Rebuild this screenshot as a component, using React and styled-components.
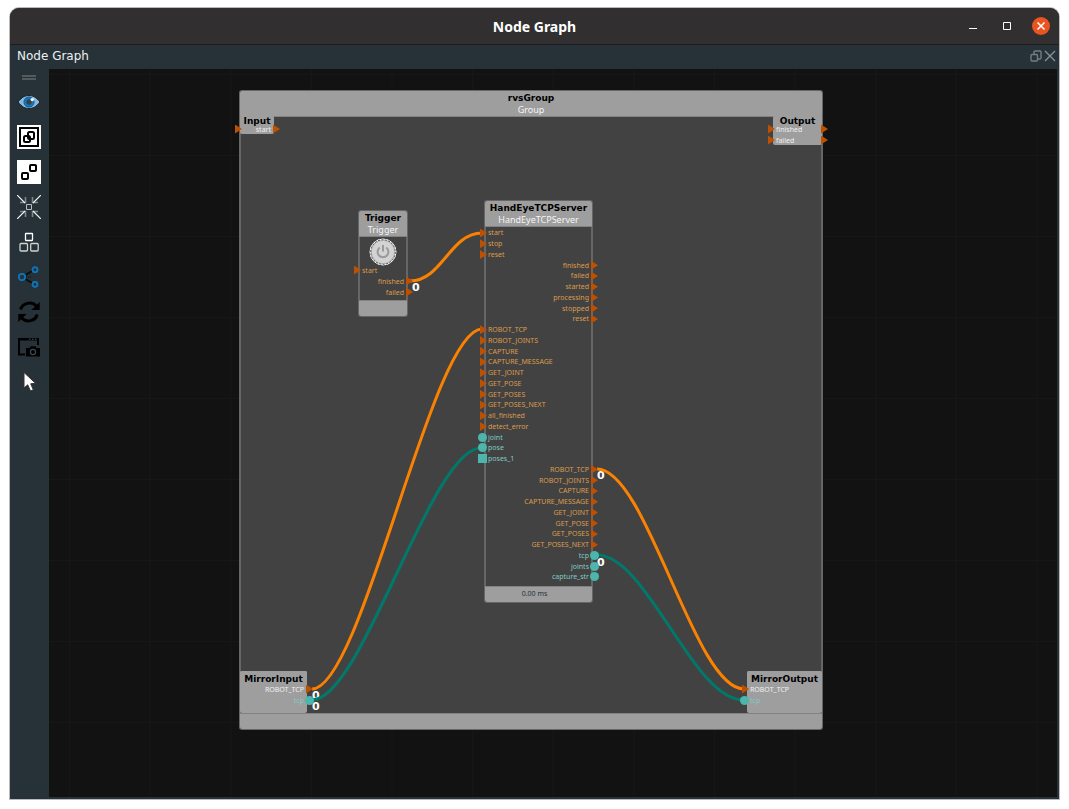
import React from "react";
import styled, { createGlobalStyle, css } from "styled-components";

const GlobalStyle = createGlobalStyle`
  * {
    box-sizing: border-box;
  }

  body {
    margin: 0;
    background: #fff;
    font-family: "DejaVu Sans", "Noto Sans", sans-serif;
  }
`;

const Page = styled.div`
  min-height: 100vh;
  display: flex;
  padding: 8px 10px 10px;
`;

const WindowFrame = styled.main`
  flex: 1;
  display: flex;
  flex-direction: column;
  background: #263238;
  border-radius: 9px 9px 0 0;
  box-shadow: 0 0 0 1px #b8babc;
  overflow: hidden;
`;

const TitleBar = styled.header`
  height: 37px;
  display: grid;
  grid-template-columns: 1fr auto 1fr;
  align-items: center;
  background: #322f30;
  border-bottom: 1px solid #1e1c1d;
`;

const WindowTitle = styled.h1`
  grid-column: 2;
  margin: 0;
  color: #fff;
  font: bold 14px "Noto Sans", sans-serif;
`;

const WindowButtons = styled.div`
  display: flex;
  justify-content: flex-end;
  gap: 16px;
  padding-right: 9px;
`;

const PlainButton = styled.button`
  display: flex;
  align-items: center;
  justify-content: center;
  padding: 0;
  border: 0;
  background: transparent;
  cursor: pointer;
`;

const WindowButton = styled(PlainButton)`
  width: 18px;
  height: 18px;
  border-radius: 50%;
  background: ${({ $close }) => ($close ? "#e95420" : "transparent")};
`;

const DockBar = styled.div`
  height: 24px;
  display: flex;
  align-items: center;
  justify-content: space-between;
  padding: 0 3px 2px 7px;
`;

const DockTitle = styled.h2`
  margin: 0;
  color: #eceff1;
  font-size: 12px;
  font-weight: normal;
  line-height: 22px;
`;

const DockButtons = styled.div`
  display: flex;
  gap: 2px;
`;

const Workspace = styled.div`
  flex: 1;
  display: flex;
  padding: 0 2px 2px 0;
`;

const ToolBar = styled.nav`
  width: 39px;
  display: flex;
  flex-direction: column;
  align-items: center;
  gap: 11px;
  padding: 6px 1px 0 0;
`;

const Grip = styled.div`
  width: 14px;
  height: 5px;
  margin-bottom: -1px;
  border: solid #535b5f;
  border-width: 2px 0;
`;

const ToolButton = styled(PlainButton)`
  width: 24px;
  height: 24px;
`;

const Canvas = styled.section`
  position: relative;
  flex: 1;
  overflow: hidden;
  background-color: #121212;
  background-image: linear-gradient(90deg, #171717 1px, transparent 1px),
    linear-gradient(#171717 1px, transparent 1px);
  background-size: 8% 81px;
  background-position: 20px 5px;
`;

const NodeBox = styled.article`
  position: absolute;
  left: ${({ $x }) => $x}px;
  top: ${({ $y }) => $y}px;
  width: ${({ $w }) => $w}px;
  height: ${({ $h }) => $h}px;
  display: flex;
  flex-direction: column;
  border-radius: 2px;
  background: ${({ $terminal }) => ($terminal ? "#9e9e9e" : "#424242")};
  box-shadow: 0 0 0 1px ${({ $terminal }) => ($terminal ? "transparent" : "#666")};
`;

const NodeHeader = styled.div`
  height: 26px;
  padding-top: 2px;
  text-align: center;
  background: #9e9e9e;
  border-bottom: 1px solid #828282;
  border-radius: 2px 2px 0 0;

  ${({ $terminal, $tight }) =>
    $terminal &&
    css`
      height: ${$tight ? 8 : 13}px;
      padding-top: ${$tight ? 0 : 3}px;
      border: 0;
    `}
`;

const NodeTitle = styled.h3`
  margin: 0;
  color: #000;
  font: bold 9px / 11px "DejaVu Sans", sans-serif;
  white-space: nowrap;
`;

const NodeType = styled.div`
  color: #f5f5f5;
  font: 9px / 11px "Noto Sans", sans-serif;
`;

const NodeBody = styled.div`
  flex: 1;
  display: flex;
  flex-direction: column;
  border: solid #666;
  border-width: 0 1px;
  padding: 1px 0 ${({ $space }) => $space || 0}px;
`;

const TerminalBody = styled.div`
  display: flex;
  flex-direction: column;
  padding: 0 1px;
`;

const NodeFooter = styled.div`
  height: 16px;
  color: #263238;
  font: 7px / 13px "Noto Sans", sans-serif;
  text-align: center;
  padding-right: 8px;
  background: #9e9e9e;
  border-top: 1px solid #828282;
  border-radius: 0 0 2px 2px;
`;

const PowerButton = styled(PlainButton)`
  height: 27px;
`;

const portColors = {
  event: "#dc9c4c",
  data: "#80cbc4",
  light: "#f0f0f0",
};

const PortRow = styled.div`
  position: relative;
  flex: ${({ $fixed }) => ($fixed ? "0 0 11px" : "1 1 0")};
  min-height: 0;
  display: flex;
  align-items: center;
  justify-content: ${({ $out }) => ($out ? "flex-end" : "flex-start")};
  padding: 0 2px;
  color: ${({ $tone }) => portColors[$tone]};
  font: 7px / 10px "Noto Sans", sans-serif;
  white-space: nowrap;
`;

const Marker = styled.i`
  position: absolute;
  top: calc(50% - 5px);
  width: 9px;
  height: 9px;
  ${({ $out }) => ($out ? "right: -8px;" : "left: -8px;")}

  ${({ $shape }) =>
    $shape === "circle" &&
    css`
      background: #4db6ac;
      border-radius: 50%;
    `}
  ${({ $shape }) =>
    $shape === "square" &&
    css`
      background: #4db6ac;
    `}
  ${({ $shape, $out }) =>
    $shape === "triangle" &&
    css`
      width: 7px;
      ${$out ? "right: -7px;" : "left: -6px;"}
      background: #bf5000;
      clip-path: polygon(0 0, 100% 50%, 0 100%);
    `}
`;

const Wires = styled.svg`
  position: absolute;
  left: 0;
  top: 0;
  width: 100%;
  height: 100%;
  fill: none;
  stroke-width: 3;
  pointer-events: none;
`;

const Count = styled.span`
  position: absolute;
  left: ${({ $x }) => $x}px;
  top: ${({ $y }) => $y}px;
  color: #fff;
  font-size: 11px;
  font-weight: bold;
  line-height: 12px;
`;

const triggerPorts = [
  { name: "start" },
  { name: "finished", out: true },
  { name: "failed", out: true },
];

const commands = [
  "ROBOT_TCP",
  "ROBOT_JOINTS",
  "CAPTURE",
  "CAPTURE_MESSAGE",
  "GET_JOINT",
  "GET_POSE",
  "GET_POSES",
  "GET_POSES_NEXT",
];

const serverPorts = [
  ...["start", "stop", "reset"].map((name) => ({ name })),
  ...["finished", "failed", "started", "processing", "stopped", "reset"].map(
    (name) => ({ name, out: true })
  ),
  ...commands.map((name) => ({ name })),
  { name: "all_finished" },
  { name: "detect_error" },
  { name: "joint", shape: "circle" },
  { name: "pose", shape: "circle" },
  { name: "poses_1", shape: "square" },
  ...commands.map((name) => ({ name, out: true })),
  ...["tcp", "joints", "capture_str"].map((name) => ({
    name,
    out: true,
    shape: "circle",
  })),
];

const terminals = [
  {
    title: "Input",
    box: [191, 47, 34, 18],
    tight: true,
    ports: [{ name: "start", out: true, both: true }],
  },
  {
    title: "Output",
    box: [724, 47, 49, 29],
    tight: true,
    ports: [
      { name: "finished", both: true },
      { name: "failed", both: true },
    ],
  },
  {
    title: "MirrorInput",
    box: [191, 602, 67, 42],
    ports: [
      { name: "ROBOT_TCP", out: true },
      { name: "tcp", out: true, shape: "circle" },
    ],
  },
  {
    title: "MirrorOutput",
    box: [698, 602, 75, 42],
    ports: [{ name: "ROBOT_TCP" }, { name: "tcp", shape: "circle" }],
  },
];

const wires = [
  { from: [361, 212], to: [433, 164], bend: 32, color: "#fb8200" },
  { from: [263, 620], to: [433, 260], bend: 50, color: "#fb8200" },
  { from: [263, 631], to: [432, 379], bend: 50, color: "#00796b" },
  { from: [548, 400], to: [695, 620], bend: 50, color: "#fb8200" },
  { from: [548, 486], to: [694, 631], bend: 50, color: "#00796b" },
];

const counts = [
  [363, 213],
  [263, 621],
  [263, 632],
  [548, 401],
  [548, 488],
];

function Port({ name, out, both, shape = "triangle", terminal }) {
  const tone = shape !== "triangle" ? "data" : terminal ? "light" : "event";
  return (
    <PortRow $out={out} $tone={tone} $fixed={terminal}>
      {name}
      <Marker $out={out} $shape={shape} />
      {both && <Marker $out={!out} $shape={shape} />}
    </PortRow>
  );
}

function Terminal({ title, box, ports, tight }) {
  const [x, y, w, h] = box;
  return (
    <NodeBox $x={x} $y={y} $w={w} $h={h} $terminal>
      <NodeHeader $terminal $tight={tight}>
        <NodeTitle>{title}</NodeTitle>
      </NodeHeader>
      <TerminalBody>
        {ports.map((port) => (
          <Port key={port.name} {...port} terminal />
        ))}
      </TerminalBody>
    </NodeBox>
  );
}

function Node({ title, type, box, ports = [], footer, space, children }) {
  const [x, y, w, h] = box;
  return (
    <NodeBox $x={x} $y={y} $w={w} $h={h}>
      <NodeHeader>
        <NodeTitle>{title}</NodeTitle>
        <NodeType>{type}</NodeType>
      </NodeHeader>
      <NodeBody $space={space}>
        {children}
        {ports.map((port, i) => (
          <Port key={i} {...port} />
        ))}
      </NodeBody>
      <NodeFooter>{footer}</NodeFooter>
    </NodeBox>
  );
}

function wirePath({ from, to, bend }) {
  return `M${from} C${from[0] + bend},${from[1]} ${to[0] - bend},${to[1]} ${to}`;
}

const Icon = ({ children, size = 24 }) => (
  <svg width={size} height={size} viewBox={`0 0 ${size} ${size}`} fill="none" aria-hidden="true">
    {children}
  </svg>
);

const tools = [
  {
    label: "Show",
    icon: (
      <>
        <path d="M1 12C5 7 8 5.5 12 5.5S19 7 23 12C19 17 16 18.5 12 18.5S5 17 1 12Z" fill="#86b9e2" stroke="#172126" />
        <circle cx="12" cy="12" r="5.2" fill="#1976b9" stroke="#0c4a78" strokeWidth="0.6" />
        <circle cx="12" cy="12" r="2.7" fill="#35424a" />
        <circle cx="15.3" cy="9.6" r="1.7" fill="#fff" />
      </>
    ),
  },
  {
    label: "Group",
    icon: (
      <>
        <path d="M0 0H24V24H0Z" fill="#fff" />
        <path d="M3 3H21V21H3Z" stroke="#000" strokeWidth="2" />
        <rect x="11" y="7" width="6" height="7" rx="1.5" stroke="#000" strokeWidth="2" />
        <rect x="7" y="11" width="6" height="6" rx="1.5" stroke="#000" strokeWidth="2" />
      </>
    ),
  },
  {
    label: "Ungroup",
    icon: (
      <>
        <path d="M0 0H24V24H0Z" fill="#fff" />
        <rect x="13" y="5" width="6" height="6" rx="1" stroke="#000" strokeWidth="2" />
        <rect x="5" y="13" width="6" height="6" rx="1" stroke="#000" strokeWidth="2" />
      </>
    ),
  },
  {
    label: "Fit to view",
    icon: (
      <>
        <path d="M3 7.5H8.5V2M15.5 2V7.5H21M3 16.5H8.5V22M15.5 22V16.5H21" stroke="#7f8789" strokeWidth="1.6" />
        <path d="M0 0L8 8M24 0L16 8M0 24L8 16M24 24L16 16" stroke="#f2f2f2" strokeWidth="1.2" />
        <path d="M9.5 9.5H14.5V14.5H9.5Z" stroke="#b9bdbe" />
      </>
    ),
  },
  {
    label: "Arrange",
    icon: (
      <g strokeWidth="1.3">
        <rect x="8.5" y="3.5" width="7" height="7" rx="0.5" stroke="#fff" />
        <rect x="3" y="13.5" width="7.5" height="7.5" rx="1" stroke="#cfd2d3" />
        <rect x="13.7" y="13.5" width="7.5" height="7.5" rx="1" stroke="#cfd2d3" />
      </g>
    ),
  },
  {
    label: "Connections",
    icon: (
      <>
        <path d="M18 4.5L5 12L18 19.5" stroke="#0a0f12" strokeWidth="2" />
        <path d="M9 12H14" stroke="#0a0f12" strokeDasharray="1 1" />
        <g fill="#263238" stroke="#0c76c0" strokeWidth="1.8">
          <circle cx="5" cy="12" r="3.2" />
          <circle cx="18" cy="4.7" r="2.5" />
          <circle cx="18" cy="19.3" r="2.5" />
        </g>
      </>
    ),
  },
  {
    label: "Refresh",
    icon: (
      <>
        <path d="M3.6 9.5C5.5 3 14.5 0.8 19.2 6M20.2 14.5C18.5 21 9.5 23.2 4.8 18" stroke="#000" strokeWidth="3" />
        <path d="M22.7 2V10H14.5ZM1.3 22V14H9.5Z" fill="#000" />
      </>
    ),
  },
  {
    label: "Capture",
    icon: (
      <>
        <path d="M8 19.5H2V4H21V10" stroke="#000" strokeWidth="2" />
        <path d="M1 3H22V5.5H1Z" fill="#000" />
        <path d="M12 4.2H20" stroke="#4a5a61" strokeDasharray="1.5 1.5" />
        <path d="M9 13H12.5L13.5 11.3H18.5L19.5 13H23V21.5H9Z" fill="#000" />
        <circle cx="16" cy="17" r="2.6" stroke="#3c4a51" strokeWidth="1.2" />
      </>
    ),
  },
  {
    label: "Select",
    icon: (
      <path d="M7 2.5V18L10.7 14.8L13.5 21L16.3 19.8L13.7 13.8L18.6 13.3Z" fill="#fff" stroke="#3a3234" />
    ),
  },
];

export default function App() {
  return (
    <Page>
      <GlobalStyle />
      <WindowFrame>
        <TitleBar>
          <WindowTitle>Node Graph</WindowTitle>
          <WindowButtons>
            <WindowButton aria-label="Minimize">
              <Icon size={18}>
                <path d="M5 11.5H13" stroke="#fff" />
              </Icon>
            </WindowButton>
            <WindowButton aria-label="Maximize">
              <Icon size={18}>
                <path d="M5.5 5.5H12.5V12.5H5.5Z" stroke="#fff" />
              </Icon>
            </WindowButton>
            <WindowButton aria-label="Close" $close>
              <Icon size={18}>
                <path d="M5.5 5.5L12.5 12.5M12.5 5.5L5.5 12.5" stroke="#fff" strokeWidth="1.5" />
              </Icon>
            </WindowButton>
          </WindowButtons>
        </TitleBar>
        <DockBar>
          <DockTitle>Node Graph</DockTitle>
          <DockButtons>
            <PlainButton aria-label="Float panel">
              <Icon size={12}>
                <path d="M4 4V2Q4 1 5 1H10Q11 1 11 2V8Q11 9 10 9H8" stroke="#747d81" strokeWidth="1.4" />
                <rect x="1" y="4.5" width="6.5" height="6.5" rx="1" stroke="#747d81" strokeWidth="1.4" />
              </Icon>
            </PlainButton>
            <PlainButton aria-label="Close panel">
              <Icon size={12}>
                <path d="M1 1L11 11M11 1L1 11" stroke="#8b9295" strokeWidth="1.3" />
              </Icon>
            </PlainButton>
          </DockButtons>
        </DockBar>
        <Workspace>
          <ToolBar>
            <Grip />
            {tools.map(({ label, icon }) => (
              <ToolButton key={label} aria-label={label}>
                <Icon>{icon}</Icon>
              </ToolButton>
            ))}
          </ToolBar>
          <Canvas>
            <Node title="rvsGroup" type="Group" box={[191, 22, 582, 638]} />
            {counts.map(([x, y]) => (
              <Count key={`${x}-${y}`} $x={x} $y={y}>
                0
              </Count>
            ))}
            <Wires>
              {wires.map((wire) => (
                <path key={`${wire.from}`} d={wirePath(wire)} stroke={wire.color} />
              ))}
            </Wires>
            {terminals.map((terminal) => (
              <Terminal key={terminal.title} {...terminal} />
            ))}
            <Node title="Trigger" type="Trigger" box={[310, 142, 48, 105]} ports={triggerPorts} space={2}>
              <PowerButton aria-label="Trigger">
                <Icon size={28}>
                  <circle cx="14" cy="14" r="13" fill="#b9b9b9" stroke="#fff" />
                  <circle cx="14" cy="14" r="12.3" stroke="#333" strokeDasharray="2 1.5" strokeWidth="0.8" />
                  <circle cx="14" cy="14" r="11" fill="#d3d3d3" />
                  <path d="M10.8 9.5A5.4 5.4 0 1 0 17.2 9.5M14 7V13.5" stroke="#9a9a9a" strokeWidth="2" />
                </Icon>
              </PowerButton>
            </Node>
            <Node
              title="HandEyeTCPServer"
              type="HandEyeTCPServer"
              box={[436, 132, 107, 401]}
              ports={serverPorts}
              footer="0.00 ms"
              space={3}
            />
          </Canvas>
        </Workspace>
      </WindowFrame>
    </Page>
  );
}
